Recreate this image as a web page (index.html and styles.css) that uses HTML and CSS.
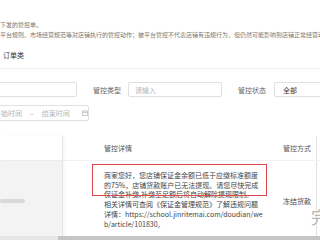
FILE: index.html
```html
<!DOCTYPE html>
<html lang="zh">
<head>
<meta charset="utf-8">
<link rel="stylesheet" href="styles.css">
</head>
<body>
<div class="page">
  <div class="notice">
    <div class="notice-line">下发的管控单。</div>
    <div class="notice-line">平台规则、市场经营规范等对店铺执行的管控动作；被平台管控不代表店铺有违规行为，但仍然可能影响到店铺正常经营动作</div>
  </div>

  <div class="tabs">
    <span class="tab">订单类</span>
  </div>

  <div class="form-row">
    <div class="input input-first"></div>
    <span class="label">管控类型</span>
    <div class="input input-type"><span class="placeholder">请输入</span></div>
    <span class="label">管控状态</span>
    <div class="input input-status"><span class="value">全部</span></div>
  </div>

  <div class="form-row form-row-2">
    <div class="input range">
      <span class="placeholder">开始时间</span>
      <span class="dash">–</span>
      <span class="placeholder">结束时间</span>
      <svg class="cal" width="6" height="6" viewBox="0 0 6 6"><rect x="0.5" y="1" width="5" height="4.5" fill="none" stroke="#bbb" stroke-width="0.8"/><line x1="0.5" y1="2.4" x2="5.5" y2="2.4" stroke="#bbb" stroke-width="0.8"/></svg>
    </div>
  </div>

  <div class="table">
    <div class="thead">
      <div class="cell col-fix"></div>
      <div class="cell col-detail">管控详情</div>
      <div class="cell col-way">管控方式</div>
      <div class="cell col-right"></div>
    </div>
    <div class="trow">
      <div class="cell col-fix"><span class="blur-bar"></span></div>
      <div class="cell col-detail">
        <div class="detail">
          <div class="dl">商家您好，您店铺保证金余额已低于应缴标准额度</div>
          <div class="dl">的75%，店铺货款账户已无法提现。请您尽快完成</div>
          <div class="dl">保证金补缴,补缴至足额后将自动解除提现限制。</div>
          <div class="dl">相关详情可查阅《保证金管理规范》了解违规问题</div>
          <div class="dl">详情：https://school.jinritemai.com/doudian/we</div>
          <div class="dl">b/article/101830。</div>
          <div class="highlight"></div>
        </div>
      </div>
      <div class="cell col-way way-value">冻结货款</div>
      <div class="cell col-right"></div>
    </div>
    <div class="scrollbar"><div class="thumb"></div></div>
  </div>

  <div class="float-glyph">完</div>
</div>
</body>
</html>
```

FILE: styles.css
```css
* { box-sizing: border-box; }
html, body { margin: 0; padding: 0; background: #fff; }
.page {
  width: 320px;
  height: 240px;
  overflow: hidden;
  position: relative;
  font-family: "Noto Sans CJK SC", "Noto Sans", sans-serif;
  color: #333;
}
.notice {
  padding-top: 20px;
  font-size: 6px;
  line-height: 10px;
  color: #777;
  white-space: nowrap;
}
.tabs {
  padding: 10px 0 8px 3px;
  border-bottom: 1px solid #ececec;
  font-size: 7px;
  line-height: 10px;
  color: #333;
}
.form-row {
  display: flex;
  align-items: center;
  margin-top: 13px;
  height: 15px;
  font-size: 7px;
  white-space: nowrap;
}
.form-row-2 { margin-top: 8px; height: 16px; }
.input {
  height: 100%;
  border: 1px solid #e0e0e0;
  border-radius: 2px;
  display: flex;
  align-items: center;
  flex-shrink: 0;
}
.input-first { margin-left: -20px; width: 97px; }
.label { margin-left: 16px; width: 28px; color: #666; flex-shrink: 0; }
.input-type { margin-left: 7px; width: 94px; padding-left: 6px; }
.input-status { margin-left: 8px; width: 60px; padding-left: 8px; }
.placeholder { color: #b5b5b5; }
.value { color: #333; }
.range { margin-left: -30px; width: 119px; padding-left: 23px; }
.dash { color: #999; margin: 0 8px 0 8px; }
.cal { margin-left: 12px; }

.table {
  margin-top: 15px;
  position: relative;
  font-size: 7px;
}
.thead, .trow { display: flex; }
.thead { height: 25px; border-bottom: 1px solid #f2f2f2; }
.trow { height: 75px; }
.cell { flex-shrink: 0; }
.col-fix {
  width: 63px;
  border-right: 1px solid #e6e6e6;
  box-shadow: 2px 0 3px rgba(0,0,0,0.04);
}
.trow .col-fix { background: #f3f3f3; display: flex; align-items: center; }
.blur-bar {
  display: block;
  width: 25px;
  height: 4px;
  margin-top: 5px;
  background: #d9d9d9;
  border-radius: 2px;
}
.col-detail { width: 210px; padding-left: 41px; }
.thead .cell { display: flex; align-items: center; color: #555; }
.thead .col-fix, .thead .col-right { display: block; }
.col-way { width: 43px; padding-left: 10px; color: #444; }
.way-value { display: flex; align-items: center; padding-top: 5px; }
.col-right { flex: 1; border-left: 1px solid #e3e3e3; }
.detail {
  position: relative;
  padding-top: 10px;
  line-height: 9.7px;
  color: #444;
  white-space: nowrap;
}
.highlight {
  position: absolute;
  left: -12px;
  top: 3px;
  width: 175px;
  height: 32px;
  border: 1.5px solid #e0484a;
}
.scrollbar {
  height: 5px;
  background: #e6e6e6;
}
.thumb {
  margin-left: 58px;
  height: 100%;
  background: #c6c6c6;
}
.float-glyph {
  position: absolute;
  left: 311px;
  top: 207px;
  font-size: 17px;
  line-height: 20px;
  color: #b8b8b8;
}
```
